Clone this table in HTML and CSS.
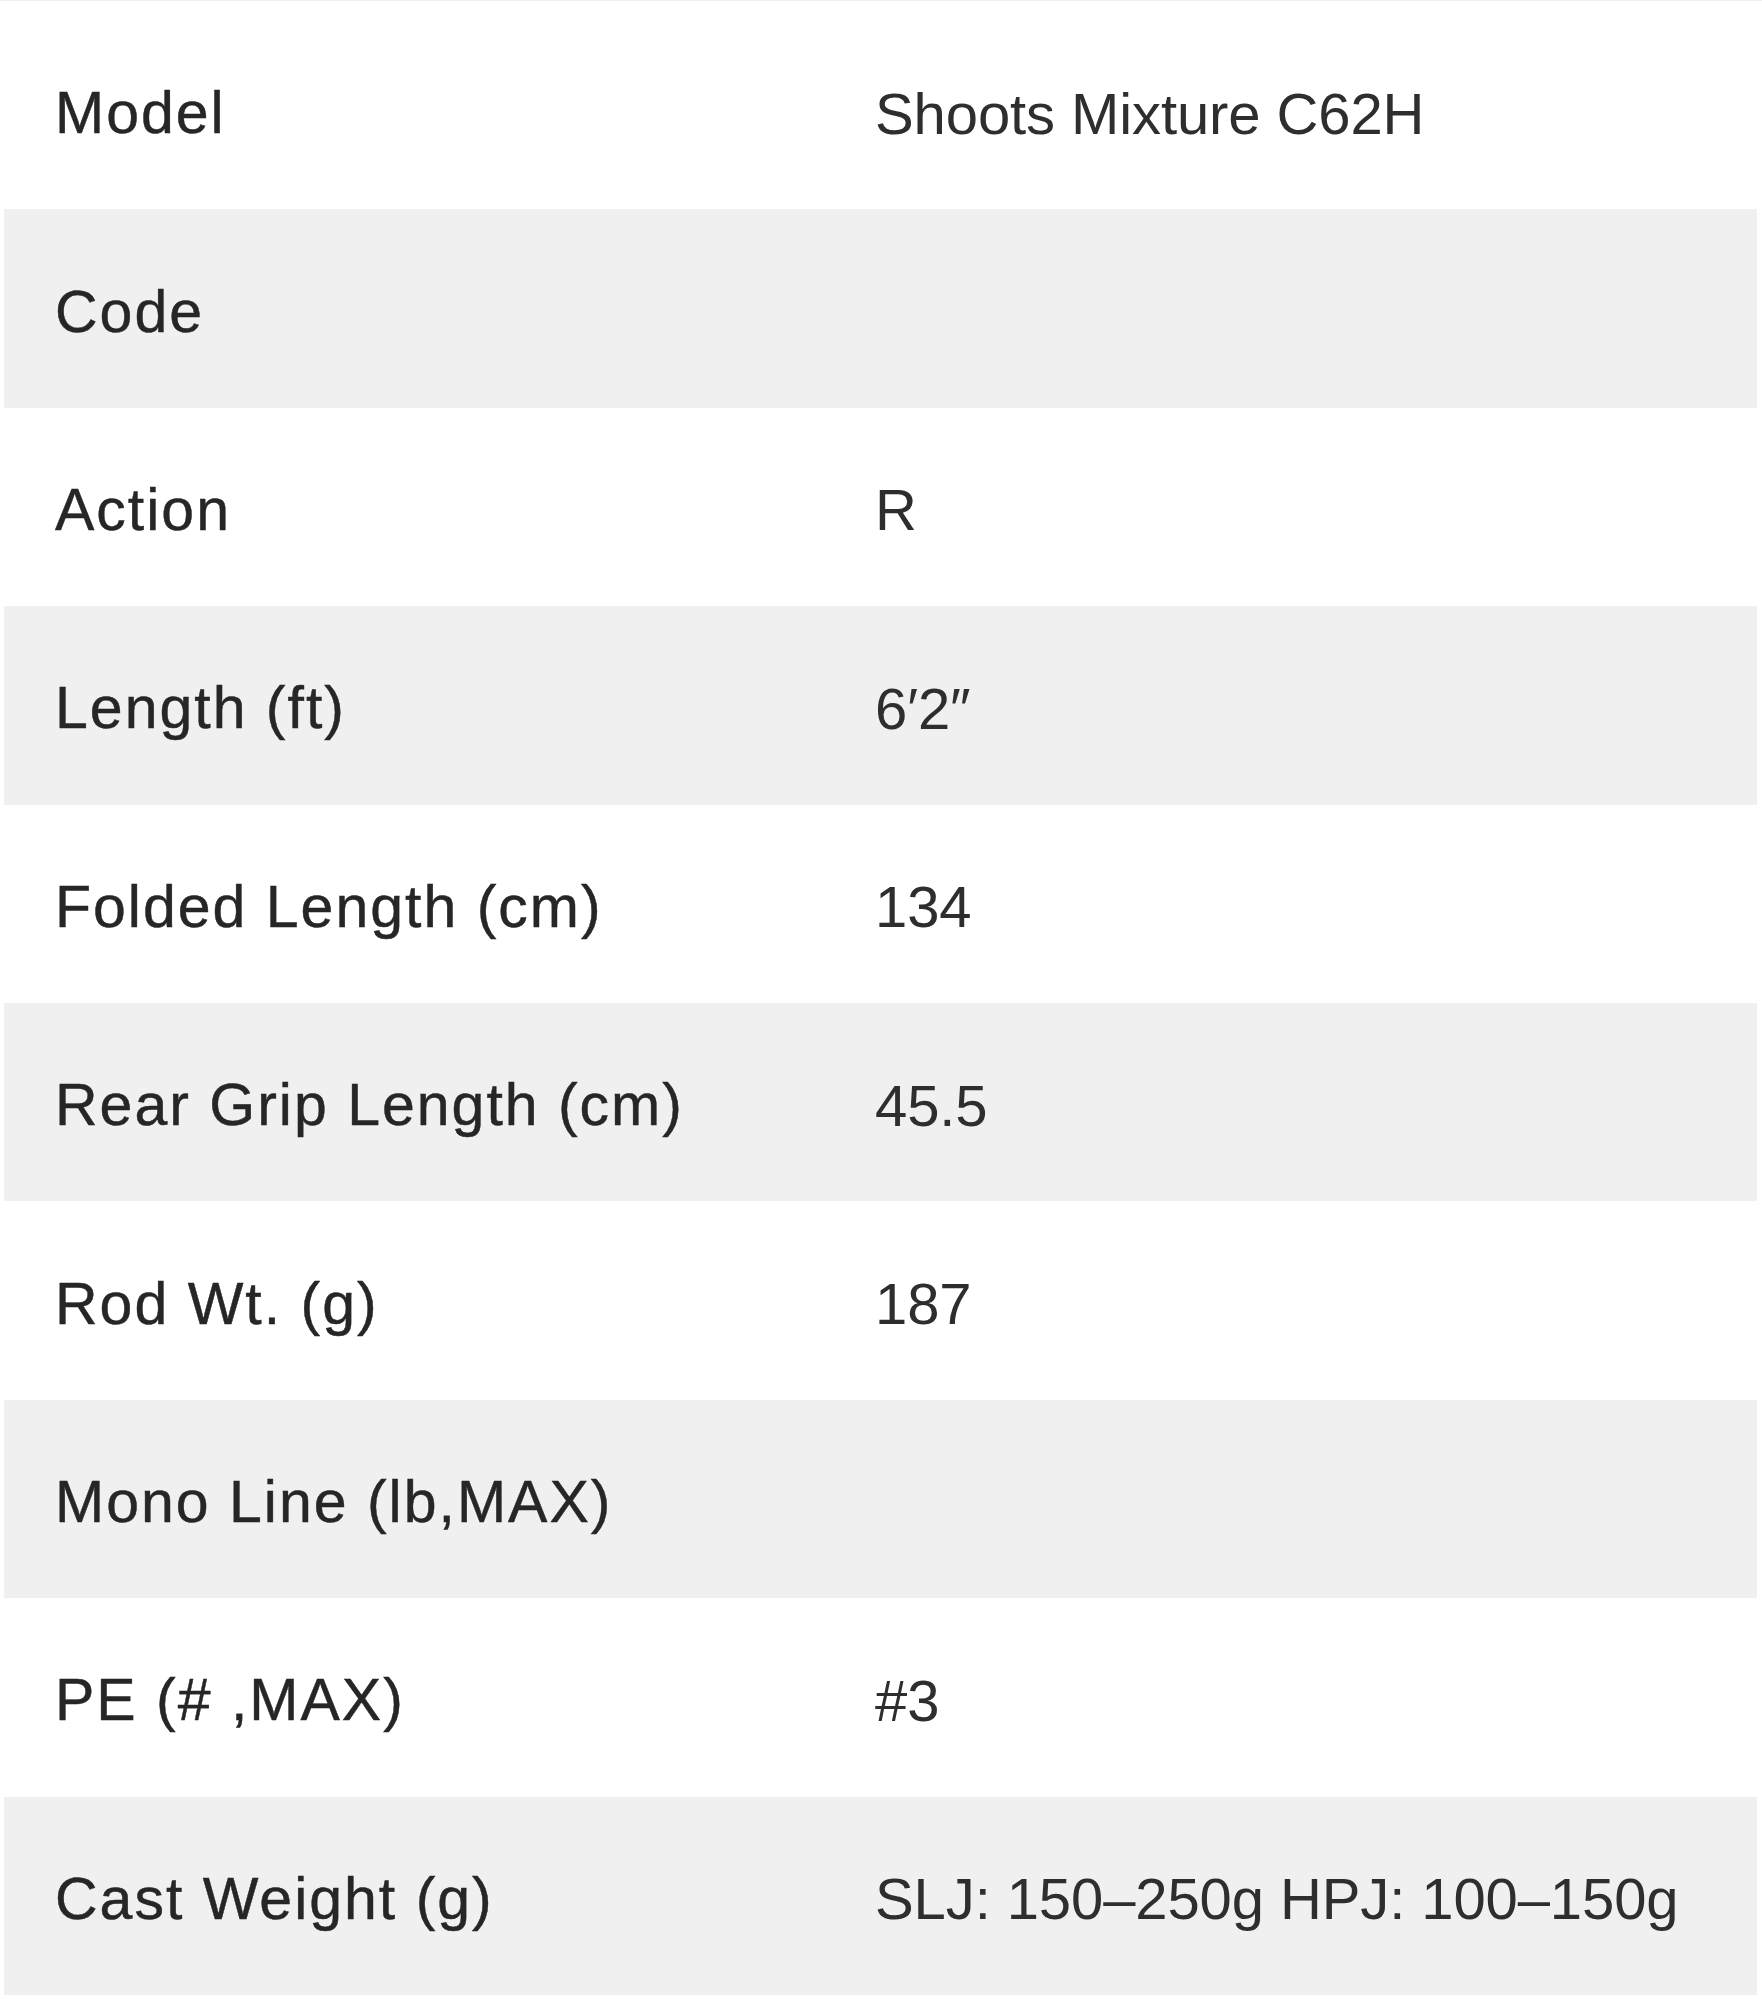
FILE: index.html
```html
<!DOCTYPE html>
<html lang="en">
<head>
<meta charset="utf-8">
<title>Spec</title>
<link rel="stylesheet" href="styles.css">
</head>
<body>
<div class="frame">
  <div class="spec">
    <div class="row odd"><div class="label">Model</div><div class="value">Shoots Mixture C62H</div></div>
    <div class="row even"><div class="label">Code</div><div class="value"></div></div>
    <div class="row odd"><div class="label">Action</div><div class="value">R</div></div>
    <div class="row even"><div class="label">Length (ft)</div><div class="value">6′2″</div></div>
    <div class="row odd"><div class="label">Folded Length (cm)</div><div class="value">134</div></div>
    <div class="row even"><div class="label">Rear Grip Length (cm)</div><div class="value">45.5</div></div>
    <div class="row odd"><div class="label">Rod Wt. (g)</div><div class="value">187</div></div>
    <div class="row even"><div class="label">Mono Line (lb,MAX)</div><div class="value"></div></div>
    <div class="row odd"><div class="label">PE (# ,MAX)</div><div class="value">#3</div></div>
    <div class="row even"><div class="label">Cast Weight (g)</div><div class="value">SLJ: 150–250g HPJ: 100–150g</div></div>
  </div>
</div>
</body>
</html>
```
FILE: styles.css
```css
html, body {
  margin: 0;
  padding: 0;
  background: #ffffff;
}
body {
  font-family: "Liberation Sans", Arial, sans-serif;
}
.frame {
  padding: 10px 5px 6px 4px;
  border-top: 1px solid #f0f0f0;
}
.spec {
  display: flex;
  flex-direction: column;
}
.row {
  display: grid;
  grid-template-columns: 819px 1fr;
  height: 198.4px;
  align-items: center;
}
.odd { background: #ffffff; }
.even { background: #f0f0f0; }
.label {
  padding: 6px 0 0 51px;
  font-size: 59px;
  letter-spacing: 2px;
  color: #262626;
  -webkit-text-stroke: 0.45px #262626;
}
.value {
  padding: 6px 0 0 52px;
  font-size: 58px;
  color: #2e2e2e;
  white-space: nowrap;
}
.value:last-child {
  letter-spacing: -0.1px;
}
```
